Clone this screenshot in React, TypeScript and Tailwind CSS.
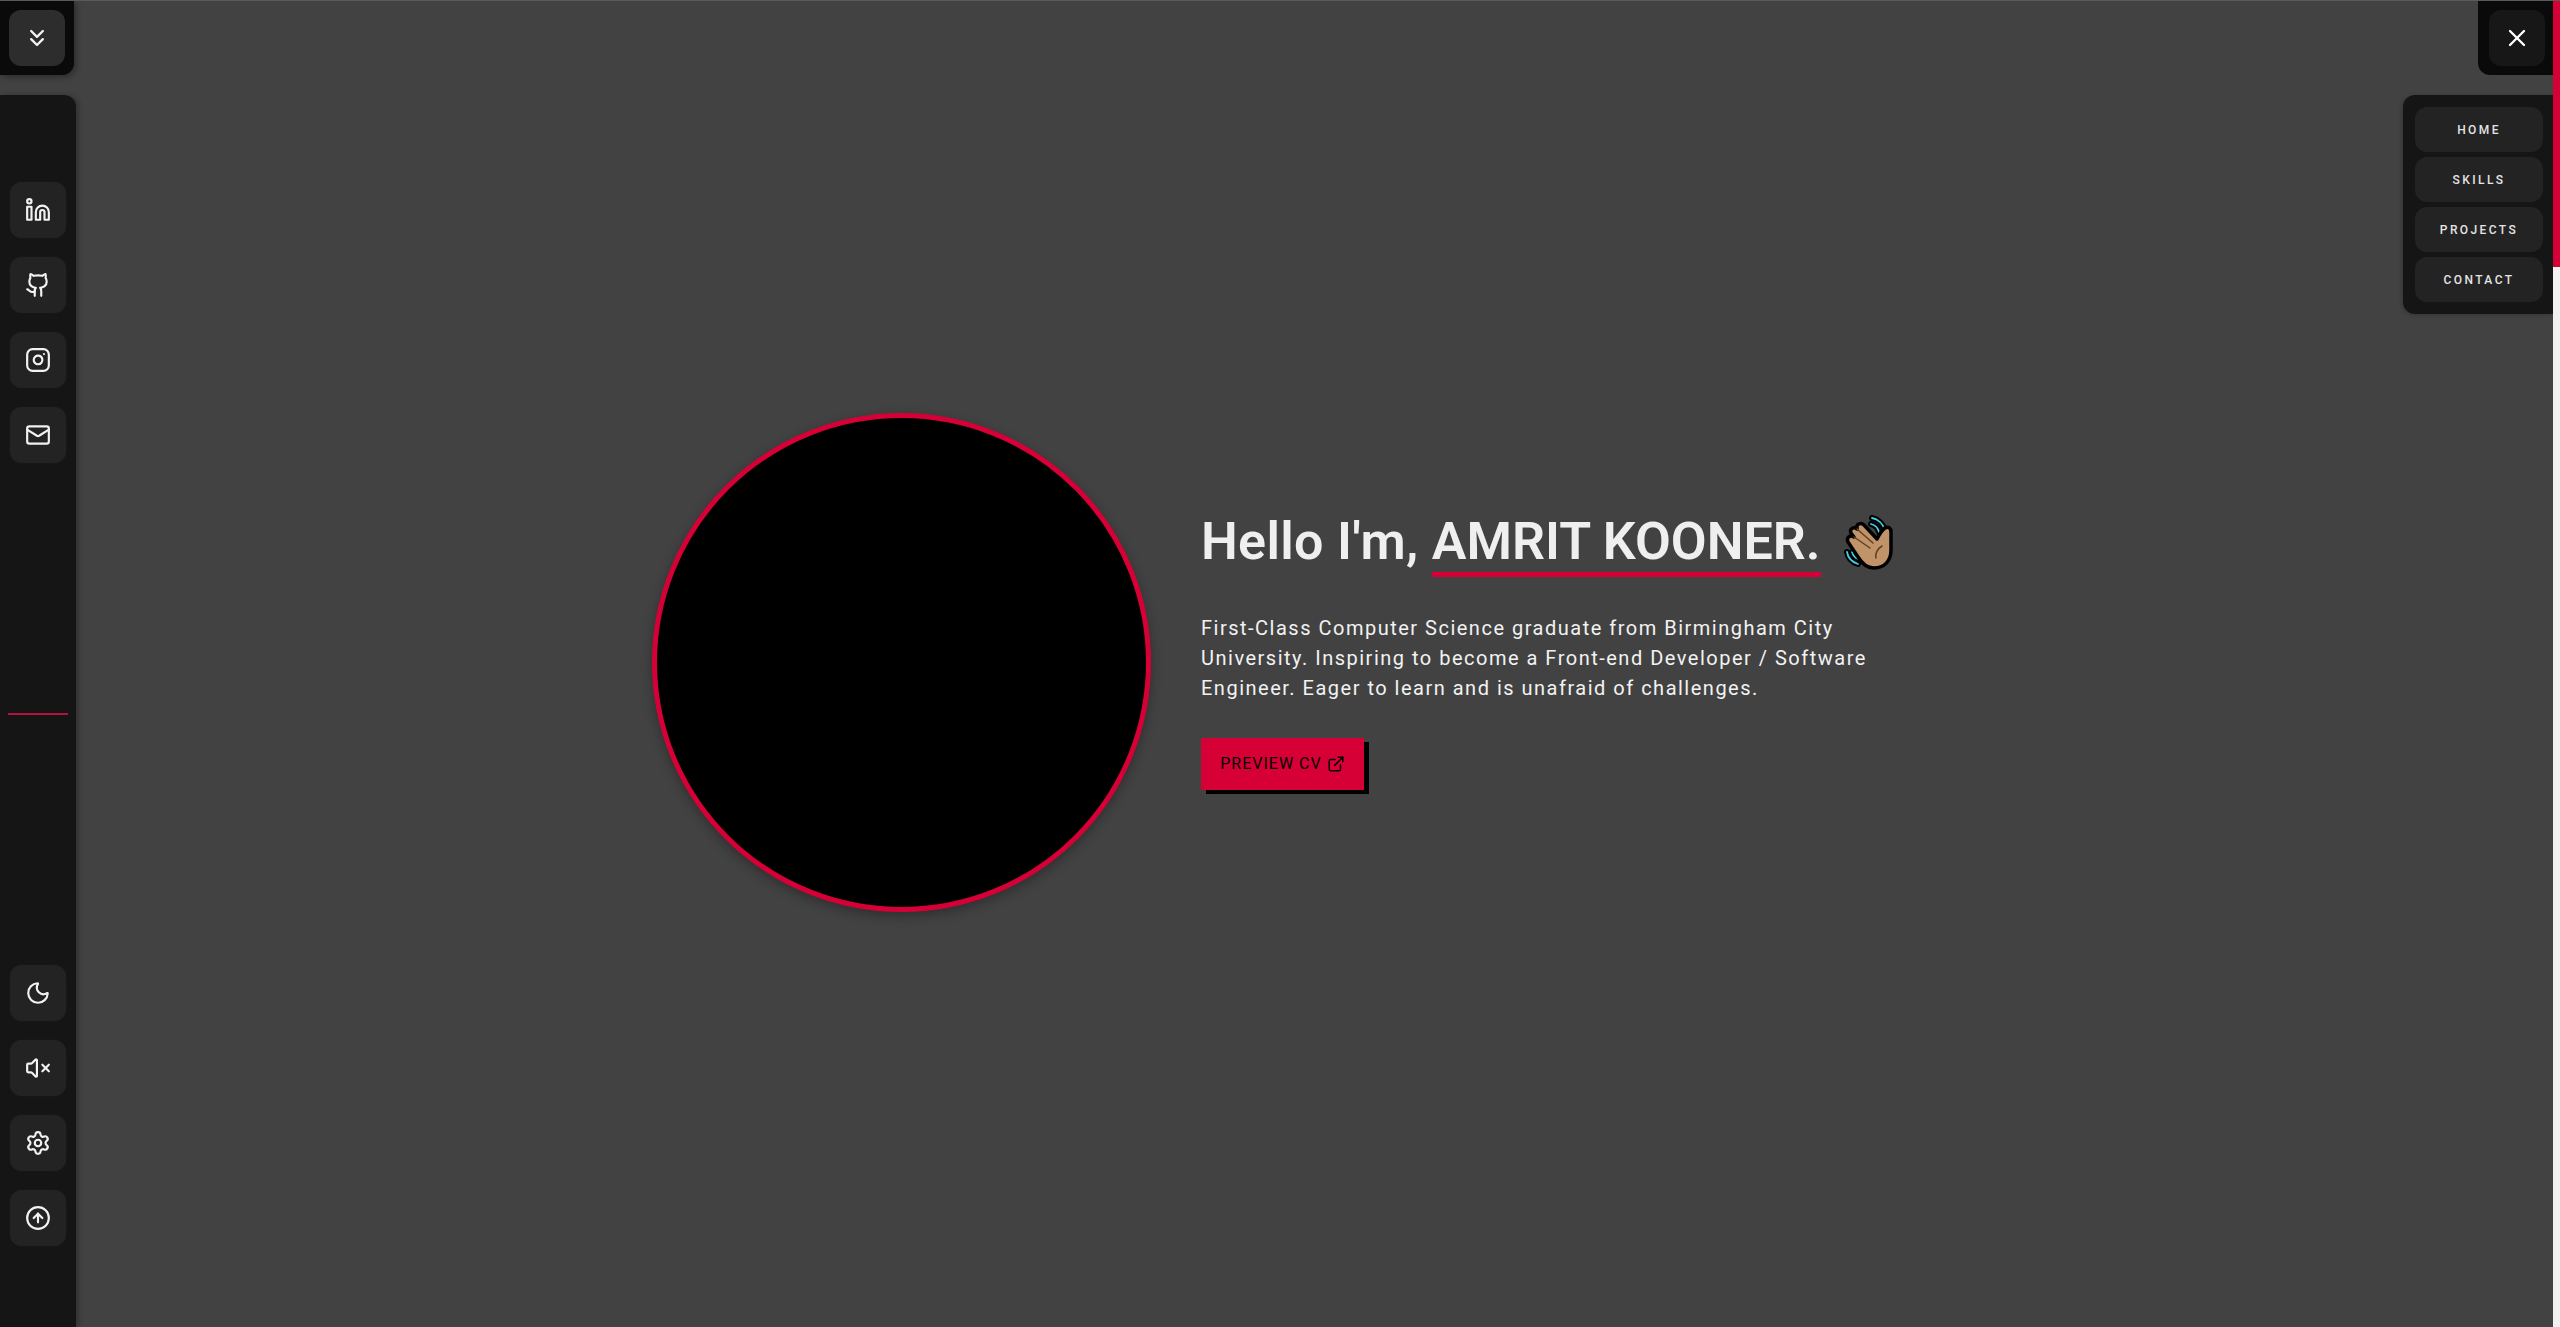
import React from 'react';
import { ChevronsDown, Linkedin, Github, Instagram, Mail, Moon, VolumeX, Settings, ArrowUpCircle, X, ExternalLink } from 'lucide-react';

const socialLinks = [Linkedin, Github, Instagram, Mail];
const controls = [Moon, VolumeX, Settings, ArrowUpCircle];
const navItems = ['HOME', 'SKILLS', 'PROJECTS', 'CONTACT'];

function IconButton({ icon: Icon }: { icon: React.ElementType }) {
  return (
    <button className="w-14 h-14 rounded-xl bg-[#232323] shadow-[0_0_2px_rgba(255,255,255,0.06)] flex items-center justify-center text-[#f2f2f2]">
      <Icon className="w-[26px] h-[26px]" strokeWidth={2} />
    </button>
  );
}

function WavingHand() {
  return (
    <svg viewBox="0 0 54 56" className="w-[54px] h-[56px]">
      <g fill="none" stroke="#000" strokeWidth="6" strokeLinecap="round">
        <path d="M28 4c6 1 11 6 13 12M27 10c4 1 7 4 8 8" />
        <path d="M3 38c1 6 5 10 11 12M8 38c1 3 3 6 6 7" />
      </g>
      <g fill="none" stroke="#3fd3e6" strokeWidth="1.8" strokeLinecap="round">
        <path d="M28 4c6 1 11 6 13 12M27 10c4 1 7 4 8 8" />
        <path d="M3 38c1 6 5 10 11 12M8 38c1 3 3 6 6 7" />
      </g>
      <path
        d="M30 54C22 54 17 48 14 43L4 28C2 24 6 20 10 23L7 19C5 15 10 12 13 15L13 14C12 10 17 8 20 11L33 25C35 21 38 16 41 14C44 12 47 14 47 18L47 36C47 47 40 54 30 54Z"
        fill="#c09468"
        stroke="#000"
        strokeWidth="3.5"
        strokeLinejoin="round"
      />
      <path d="M10 23l16 11M13 15l16 14M32 44c-1-4 1-9 6-12" fill="none" stroke="#5e3f24" strokeWidth="1.5" strokeLinecap="round" />
    </svg>
  );
}

export default function App() {
  return (
    <div className="h-screen w-full overflow-hidden flex bg-[#424242] font-['Roboto',sans-serif] border-t border-t-[#5a5a5a]">
      {/* Left rail */}
      <div className="w-[76px] shrink-0 flex flex-col">
        <div className="w-[74px] h-[74px] shrink-0 bg-[#0a0a0a] rounded-br-xl flex items-center justify-center shadow-[2px_2px_6px_rgba(0,0,0,0.35)]">
          <button className="w-14 h-14 rounded-xl bg-[#2d2d2d] flex items-center justify-center text-[#f2f2f2]">
            <ChevronsDown className="w-[28px] h-[28px]" strokeWidth={2} />
          </button>
        </div>
        <aside className="mt-[20px] flex-1 bg-[#151515] rounded-tr-xl pl-[10px] pt-[87px] pb-[81px] flex flex-col shadow-[3px_0_5px_rgba(0,0,0,0.25)]">
          <div className="flex flex-col gap-[19px]">
            {socialLinks.map((icon, i) => (
              <IconButton key={i} icon={icon} />
            ))}
          </div>
          <div className="flex-1 flex items-center">
            <div className="w-[60px] h-[2px] -ml-[2px] bg-[#b5103f]" />
          </div>
          <div className="flex flex-col gap-[19px]">
            {controls.map((icon, i) => (
              <IconButton key={i} icon={icon} />
            ))}
          </div>
        </aside>
      </div>

      {/* Hero */}
      <main className="flex-1 flex items-center pl-[576px]">
        <div className="flex items-center gap-[50px]">
          <div className="w-[499px] h-[499px] mb-[3px] rounded-full bg-black border-[5px] border-[#d70036] shadow-[0_4px_12px_rgba(0,0,0,0.3)]" />
          <div className="w-[700px] pb-[26px]">
            <h1 className="flex items-center whitespace-nowrap text-[52px] leading-[60px] font-semibold text-[#efefef]">
              <span className="whitespace-pre">
                <span className="tracking-[0.3px]">Hello I'm, </span>
                <span className="border-b-[5px] border-[#d70036]">AMRIT KOONER.</span>
              </span>
              <span className="ml-[23px]"><WavingHand /></span>
            </h1>
            <p className="mt-[41px] w-[680px] text-[20px] leading-[30px] tracking-[1.5px] text-[#f2f2f2]">
              First-Class Computer Science graduate from Birmingham City University. Inspiring to become a Front-end Developer / Software Engineer. Eager to learn and is unafraid of challenges.
            </p>
            <button className="mt-[35px] w-[163px] h-[52px] bg-[#d70036] shadow-[5px_4px_0_#000] flex items-center justify-center gap-[5px] text-[16px] tracking-[1px] text-black">
              PREVIEW CV
              <ExternalLink className="w-[18px] h-[18px]" strokeWidth={2} />
            </button>
          </div>
        </div>
      </main>

      {/* Right nav */}
      <div className="w-[150px] shrink-0 flex flex-col items-end">
        <div className="w-[75px] h-[74px] shrink-0 bg-[#0a0a0a] rounded-bl-xl flex items-center pl-[11px]">
          <button className="w-14 h-14 rounded-xl bg-[#171717] flex items-center justify-center text-white">
            <X className="w-[28px] h-[28px]" strokeWidth={2} />
          </button>
        </div>
        <nav className="mt-[20px] w-[150px] bg-[#151515] rounded-l-xl pl-[12px] py-[12px] flex flex-col gap-[5px] shadow-[-1px_1px_4px_rgba(0,0,0,0.2)]">
          {navItems.map((item) => (
            <button key={item} className="w-[128px] h-[45px] rounded-xl bg-[#232323] text-[12px] font-medium tracking-[2.4px] text-[#e4e4e4]">
              {item}
            </button>
          ))}
        </nav>
      </div>

      {/* Scrollbar */}
      <div className="w-[7px] shrink-0 bg-[#f1f1f1]">
        <div className="h-[266px] bg-[#d70036]" />
      </div>
    </div>
  );
}
